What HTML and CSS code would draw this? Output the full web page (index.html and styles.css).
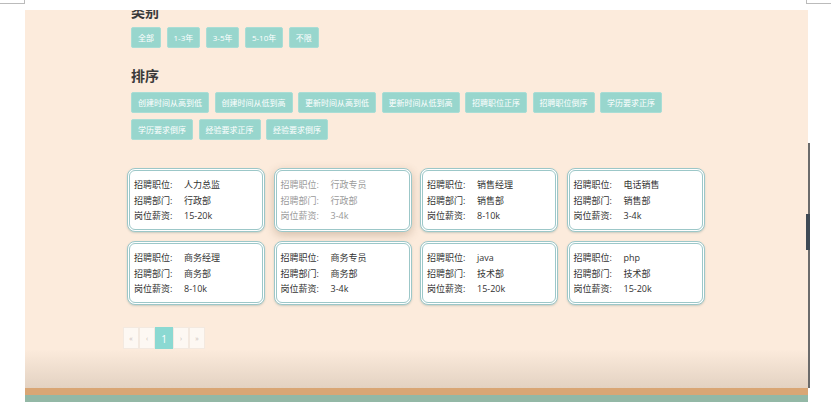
FILE: index.html
```html
<!DOCTYPE html>
<html lang="zh-CN">
<head>
  <meta charset="UTF-8" />
  <title>招聘信息</title>
  <meta name="viewport" content="width=device-width, initial-scale=1.0" />
  <link rel="stylesheet" href="styles.css">
</head>
<body>
  <div class="topbar">
    <span class="corner left"></span>
    <span class="corner right"></span>
  </div>

  <div class="main">
    <div class="inner">
      <h3 class="title">类别</h3>
      <div class="tags">
        <button class="tag">全部</button>
        <button class="tag">1-3年</button>
        <button class="tag">3-5年</button>
        <button class="tag">5-10年</button>
        <button class="tag">不限</button>
      </div>

      <h3 class="title sort-title">排序</h3>
      <div class="tags">
        <button class="tag">创建时间从高到低</button>
        <button class="tag">创建时间从低到高</button>
        <button class="tag">更新时间从高到低</button>
        <button class="tag">更新时间从低到高</button>
        <button class="tag">招聘职位正序</button>
        <button class="tag">招聘职位倒序</button>
        <button class="tag">学历要求正序</button>
        <button class="tag">学历要求倒序</button>
        <button class="tag">经验要求正序</button>
        <button class="tag">经验要求倒序</button>
      </div>

      <div class="cards">
        <div class="card">
          <div class="row"><span class="label">招聘职位:</span><span>人力总监</span></div>
          <div class="row"><span class="label">招聘部门:</span><span>行政部</span></div>
          <div class="row"><span class="label">岗位薪资:</span><span>15-20k</span></div>
        </div>
        <div class="card hover">
          <div class="row"><span class="label">招聘职位:</span><span>行政专员</span></div>
          <div class="row"><span class="label">招聘部门:</span><span>行政部</span></div>
          <div class="row"><span class="label">岗位薪资:</span><span>3-4k</span></div>
        </div>
        <div class="card">
          <div class="row"><span class="label">招聘职位:</span><span>销售经理</span></div>
          <div class="row"><span class="label">招聘部门:</span><span>销售部</span></div>
          <div class="row"><span class="label">岗位薪资:</span><span>8-10k</span></div>
        </div>
        <div class="card">
          <div class="row"><span class="label">招聘职位:</span><span>电话销售</span></div>
          <div class="row"><span class="label">招聘部门:</span><span>销售部</span></div>
          <div class="row"><span class="label">岗位薪资:</span><span>3-4k</span></div>
        </div>
        <div class="card">
          <div class="row"><span class="label">招聘职位:</span><span>商务经理</span></div>
          <div class="row"><span class="label">招聘部门:</span><span>商务部</span></div>
          <div class="row"><span class="label">岗位薪资:</span><span>8-10k</span></div>
        </div>
        <div class="card">
          <div class="row"><span class="label">招聘职位:</span><span>商务专员</span></div>
          <div class="row"><span class="label">招聘部门:</span><span>商务部</span></div>
          <div class="row"><span class="label">岗位薪资:</span><span>3-4k</span></div>
        </div>
        <div class="card">
          <div class="row"><span class="label">招聘职位:</span><span>java</span></div>
          <div class="row"><span class="label">招聘部门:</span><span>技术部</span></div>
          <div class="row"><span class="label">岗位薪资:</span><span>15-20k</span></div>
        </div>
        <div class="card">
          <div class="row"><span class="label">招聘职位:</span><span>php</span></div>
          <div class="row"><span class="label">招聘部门:</span><span>技术部</span></div>
          <div class="row"><span class="label">岗位薪资:</span><span>15-20k</span></div>
        </div>
      </div>

      <ul class="pager">
        <li>«</li>
        <li>‹</li>
        <li class="active">1</li>
        <li>›</li>
        <li>»</li>
      </ul>
    </div>

    <div class="fade"></div>
    <div class="stripe orange"></div>
    <div class="stripe green"></div>

    <span class="scroll-line"></span>
    <span class="scroll-thumb"></span>
  </div>
</body>
</html>
```

FILE: styles.css
```css
:root {
  --peach: #fcebdc;
  --tag: #98d6cd;
  --card-border: #9cc7c8;
  --text: #333;
}

body {
  margin: 0;
  height: 411px;
  overflow: hidden;
  background: #fff;
  font-family: "Open Sans", "Noto Sans CJK SC", sans-serif;
  color: var(--text);
}

.topbar {
  position: absolute;
  top: 0;
  left: 0;
  right: 0;
  height: 10px;
  background: #fff;
  z-index: 5;
}

.corner {
  position: absolute;
  top: -1px;
  width: 24px;
  height: 3px;
  border: 1px solid #bbb;
}

.corner.left { left: -1px; }
.corner.right { right: -1px; }

.main {
  position: relative;
  width: 783px;
  margin-left: 25px;
  background: var(--peach);
}

.inner {
  padding: 2px 0 0 106px;
}

.title {
  margin: 0;
  font-size: 14px;
  line-height: 20px;
  font-weight: bold;
  color: #3a3a3a;
}

.sort-title {
  margin-top: 18px;
}

.tags {
  display: flex;
  flex-wrap: wrap;
  gap: 6px 5.5px;
  width: 540px;
  margin-top: 5px;
}

.sort-title + .tags {
  margin-top: 6px;
}

.tag {
  height: 21px;
  padding: 0 6px;
  font-family: inherit;
  font-size: 8px;
  color: #fff;
  background: var(--tag);
  border: 1px solid #a9ddd5;
  border-radius: 2px;
}

.cards {
  display: grid;
  grid-template-columns: repeat(4, 138px);
  column-gap: 8.5px;
  row-gap: 9px;
  margin: 28px 0 0 -4px;
}

.card {
  height: 64px;
  box-sizing: border-box;
  padding: 6px 4px 0;
  background: #fff;
  border: 3px double var(--card-border);
  border-radius: 8px;
  box-shadow: 0 1px 2px rgba(90, 130, 130, 0.3);
  font-size: 9px;
}

.card.hover {
  color: #9a9a9a;
  box-shadow: 0 3px 10px rgba(120, 90, 60, 0.3);
}

.row {
  display: flex;
  line-height: 15.5px;
}

.label {
  width: 50px;
}

.pager {
  display: flex;
  list-style: none;
  margin: 22px 0 0 -8px;
  padding: 0;
}

.pager li {
  width: 16px;
  height: 22px;
  line-height: 22px;
  text-align: center;
  font-size: 7px;
  color: #c8c0b8;
  background: #fdf8f3;
  border: 1px solid #f3e9e0;
  box-sizing: border-box;
}

.pager li.active {
  width: 18px;
  font-size: 10px;
  color: #fff;
  background: #8bd9d2;
  border-color: #8bd9d2;
}

.fade {
  height: 39px;
  background: linear-gradient(to bottom, var(--peach), #e3d2c2);
}

.stripe {
  height: 7px;
}

.stripe.orange { background: #d9a675; }
.stripe.green { background: #93b8a6; }

.scroll-line {
  position: absolute;
  right: -2px;
  top: 143px;
  width: 2px;
  height: 245px;
  background: #6b6b6b;
}

.scroll-thumb {
  position: absolute;
  right: -2px;
  top: 214px;
  width: 4px;
  height: 36px;
  background: #3f4a55;
}
```
